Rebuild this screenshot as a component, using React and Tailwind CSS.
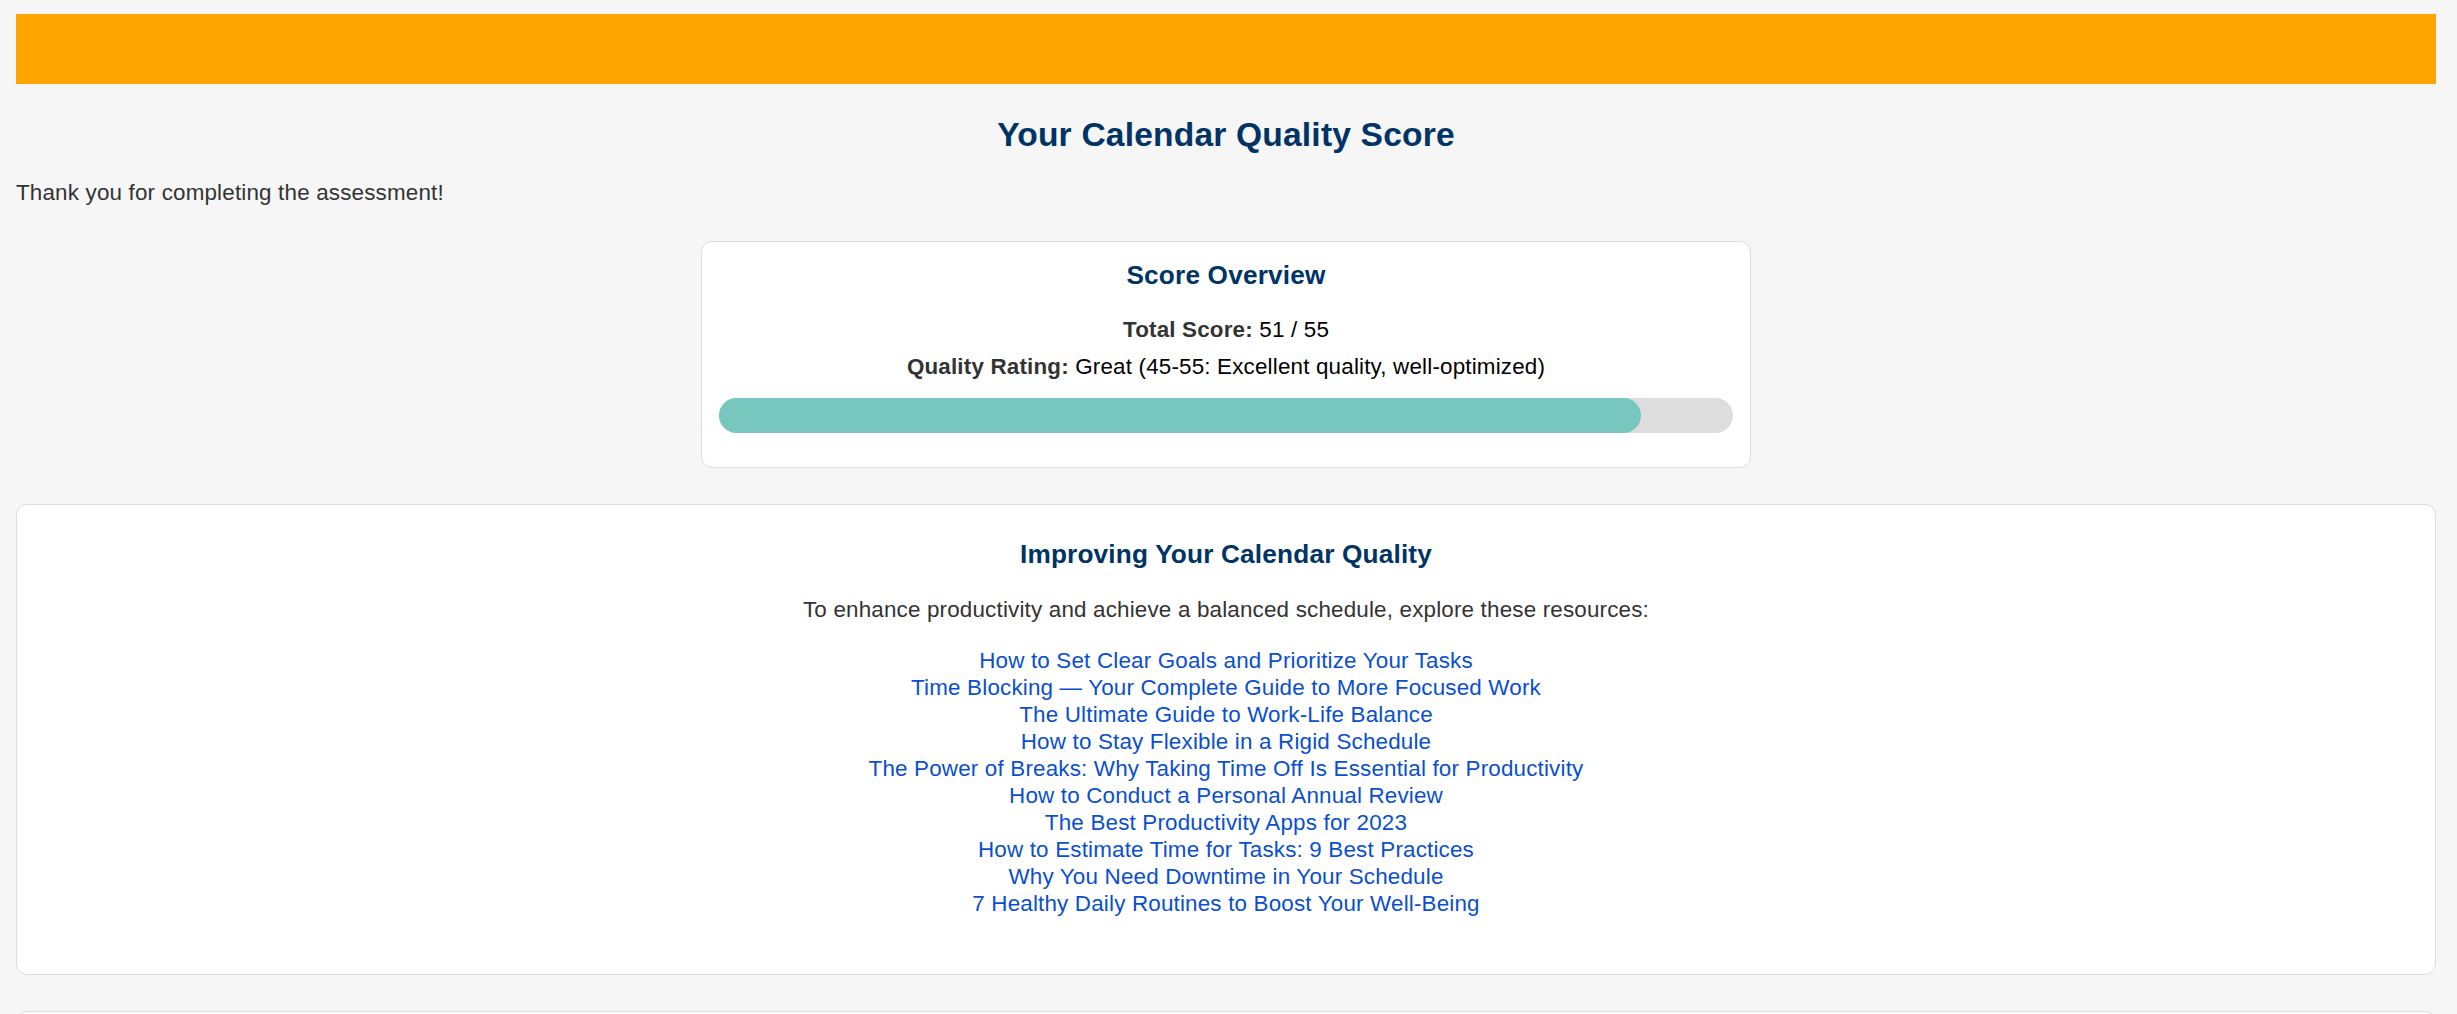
import React from "react";

const links = [
  "How to Set Clear Goals and Prioritize Your Tasks",
  "Time Blocking — Your Complete Guide to More Focused Work",
  "The Ultimate Guide to Work-Life Balance",
  "How to Stay Flexible in a Rigid Schedule",
  "The Power of Breaks: Why Taking Time Off Is Essential for Productivity",
  "How to Conduct a Personal Annual Review",
  "The Best Productivity Apps for 2023",
  "How to Estimate Time for Tasks: 9 Best Practices",
  "Why You Need Downtime in Your Schedule",
  "7 Healthy Daily Routines to Boost Your Well-Being",
];

export default function App() {
  return (
    <div className="min-h-screen bg-[#f6f6f6] pl-4 pr-[21px] pt-[14px] pb-10 font-['Liberation_Sans',Arial,sans-serif] text-[22.4px] tracking-[0.18px] text-[#333]">
      <div className="h-[70px] bg-[#ffa500]" />
      <h2 className="mt-[31.6px] text-center text-[33.6px] font-bold leading-[38.6px] text-[#003366]">
        Your Calendar Quality Score
      </h2>
      <p className="mt-[25.5px] leading-[25.7px]">Thank you for completing the assessment!</p>

      <div className="mx-auto mt-[35.5px] w-[1050px] rounded-[11px] border border-[#dddddd] bg-white px-[17px] pt-[18px] pb-[34px] text-center">
        <h3 className="text-[26.2px] font-bold leading-[30px] text-[#003366]">Score Overview</h3>
        <p className="mt-[27px] leading-[25.7px] text-black">
          <strong className="font-bold text-[#333]">Total Score:</strong> 51 / 55
        </p>
        <p className="mt-[11px] leading-[25.7px] text-black">
          <strong className="font-bold text-[#333]">Quality Rating:</strong> Great (45-55: Excellent quality, well-optimized)
        </p>
        <div className="mt-[18.6px] h-[35px] w-full rounded-full bg-[#dddddd]">
          <div className="h-full rounded-full bg-[#78c7bf]" style={{ width: `${(922 / 1014) * 100}%` }} />
        </div>
      </div>

      <div className="mt-[36px] rounded-[11px] border border-[#dddddd] bg-white px-[34px] pt-[34.6px] pb-[57.2px] text-center">
        <h3 className="text-[26.2px] font-bold leading-[30px] text-[#003366]">Improving Your Calendar Quality</h3>
        <p className="mt-[27.4px] leading-[25.7px]">
          To enhance productivity and achieve a balanced schedule, explore these resources:
        </p>
        <ul className="mt-[24.1px] flex flex-col items-center">
          {links.map((l) => (
            <li key={l} className="leading-[27px]">
              <a href="#" className="text-[#0a4fd0]">{l}</a>
            </li>
          ))}
        </ul>
      </div>

      <div className="mt-[36px] h-[300px] rounded-[11px] border border-[#dddddd] bg-white" />
    </div>
  );
}
